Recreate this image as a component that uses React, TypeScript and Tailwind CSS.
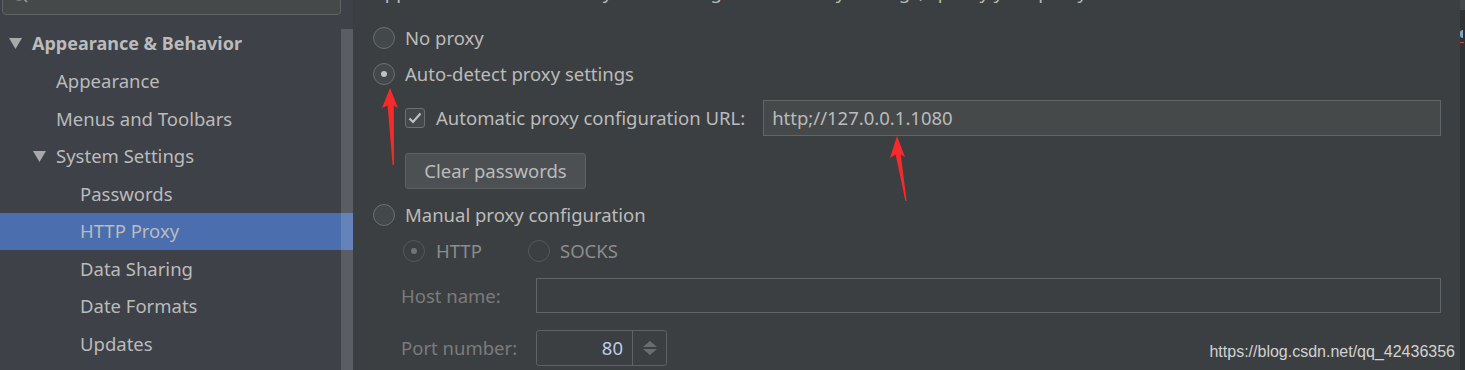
import React from "react";

const font = { fontFamily: '"Noto Sans", "Open Sans", sans-serif' };

// Sidebar tree rows
const rows: { label: string; indent: number; caret?: boolean; bold?: boolean; selected?: boolean }[] = [
  { label: "Appearance & Behavior", indent: 0, caret: true, bold: true },
  { label: "Appearance", indent: 1 },
  { label: "Menus and Toolbars", indent: 1 },
  { label: "System Settings", indent: 1, caret: true },
  { label: "Passwords", indent: 2 },
  { label: "HTTP Proxy", indent: 2, selected: true },
  { label: "Data Sharing", indent: 2 },
  { label: "Date Formats", indent: 2 },
  { label: "Updates", indent: 2 },
];

const Caret = () => (
  <svg width="13" height="11" viewBox="0 0 13 11" className="shrink-0">
    <polygon points="0,0 13,0 6.5,11" fill="#a9a9a9" />
  </svg>
);

const Radio = ({ checked, disabled }: { checked?: boolean; disabled?: boolean }) => (
  <span
    className={
      disabled
        ? "w-[22px] h-[22px] rounded-full border border-[#555759] flex items-center justify-center shrink-0"
        : "w-[22px] h-[22px] rounded-full border border-[#6c6f71] bg-[#43494a] flex items-center justify-center shrink-0"
    }
  >
    {checked && (
      <span className={disabled ? "w-[6px] h-[6px] rounded-full bg-[#737373]" : "w-[6px] h-[6px] rounded-full bg-[#c0c0c0]"} />
    )}
  </span>
);

const Sidebar = () => (
  <div className="w-[353px] shrink-0 bg-[#3e4148] relative flex flex-col">
    {/* search field, scrolled partly out of view */}
    <div className="relative ml-[2px] w-[339px] h-[31px] -mt-[16px] bg-[#45494a] border border-[#5f6263] rounded-[4px]">
      <svg width="20" height="20" viewBox="0 0 20 20" className="absolute left-[7px] top-[2px]">
        <circle cx="9" cy="7" r="6" fill="none" stroke="#8e9297" strokeWidth="1.6" />
        <line x1="13.5" y1="11.5" x2="17" y2="15" stroke="#8e9297" strokeWidth="1.8" />
      </svg>
    </div>
    <div className="mt-[10px] flex flex-col">
      {rows.map((r) => (
        <div
          key={r.label}
          className={
            "h-[37.5px] flex items-center text-[#bbbbbb] " +
            (r.selected ? "bg-[#4b6eaf] " : "") +
            (r.bold ? "font-bold text-[18px] " : "text-[18.5px] ")
          }
        >
          {r.indent === 0 && (
            <div className="flex items-center pl-[9px] gap-[10px]">
              <Caret />
              <span>{r.label}</span>
            </div>
          )}
          {r.indent === 1 && (
            <div className={r.caret ? "flex items-center pl-[33px] gap-[10px]" : "pl-[56px]"}>
              {r.caret && <Caret />}
              <span>{r.label}</span>
            </div>
          )}
          {r.indent === 2 && <span className="pl-[80px]">{r.label}</span>}
        </div>
      ))}
    </div>
    {/* overlay scrollbar */}
    <div className="absolute right-0 top-[29px] bottom-0 w-[12px] bg-white/15" />
  </div>
);

const Pane = () => (
  <div className="flex-1 min-w-0 bg-[#3c3f41] flex flex-col pl-[20px] pr-[19px] text-[18.5px] text-[#bbbbbb]">
    {/* heading line scrolled out of view: only descenders remain */}
    <div className="h-[6px] overflow-hidden">
      <div className="-mt-[20px] leading-[24px] whitespace-nowrap">
        Appearance &amp; Behavior › System Settings › HTTP Proxy settings, specify your proxy
      </div>
    </div>

    <div className="mt-[14px] h-[36px] flex items-center gap-[10px]">
      <Radio />
      <span>No proxy</span>
    </div>
    <div className="h-[36px] flex items-center gap-[10px]">
      <Radio checked />
      <span>Auto-detect proxy settings</span>
    </div>

    <div className="mt-[8px] h-[36px] flex items-center pl-[32px]">
      <span className="w-[20px] h-[20px] rounded-[3px] border border-[#6c6f71] bg-[#43494a] flex items-center justify-center shrink-0">
        <svg width="14" height="12" viewBox="0 0 14 12">
          <polyline points="1.5,6.5 5,10 12.5,1.5" fill="none" stroke="#c0c0c0" strokeWidth="2.2" />
        </svg>
      </span>
      <span className="ml-[11px] whitespace-nowrap">Automatic proxy configuration URL:</span>
      <div className="ml-[18px] flex-1 h-[36px] bg-[#45494a] border border-[#646464] flex items-center pl-[8px]">
        http;//127.0.0.1.1080
      </div>
    </div>

    <div className="mt-[17px] ml-[32px] w-[181px] h-[36px] bg-[#4c5052] border border-[#5e6263] rounded-[3px] flex items-center justify-center">
      Clear passwords
    </div>

    <div className="mt-[8px] h-[36px] flex items-center gap-[10px]">
      <Radio />
      <span>Manual proxy configuration</span>
    </div>

    <div className="h-[36px] flex items-center pl-[30px] text-[#8c8c8c]">
      <div className="w-[125px] flex items-center gap-[11px]">
        <Radio checked disabled />
        <span>HTTP</span>
      </div>
      <div className="flex items-center gap-[10px]">
        <Radio disabled />
        <span>SOCKS</span>
      </div>
    </div>

    <div className="mt-[9px] h-[35px] flex items-center pl-[28px]">
      <span className="w-[135px] shrink-0 text-[#7b7b7b]">Host name:</span>
      <div className="flex-1 h-[35px] border border-[#646464]" />
    </div>

    <div className="mt-[17px] h-[36px] flex items-center pl-[28px]">
      <span className="w-[135px] shrink-0 text-[#7b7b7b]">Port number:</span>
      <div className="w-[131px] h-[36px] border border-[#5f6263] rounded-[3px] flex">
        <div className="flex-1 flex items-center justify-end pr-[9px] text-[#b9cde6]">80</div>
        <div className="w-[34px] border-l border-[#5f6263] flex flex-col items-center justify-center gap-[2px]">
          <svg width="14" height="6" viewBox="0 0 14 6">
            <polygon points="7,0 14,6 0,6" fill="#6a6d70" />
          </svg>
          <svg width="14" height="6" viewBox="0 0 14 6">
            <polygon points="0,0 14,0 7,6" fill="#6a6d70" />
          </svg>
        </div>
      </div>
    </div>
  </div>
);

export default function App() {
  return (
    <div className="w-[1465px] h-[370px] overflow-hidden relative flex bg-[#3c3f41]" style={font}>
      <Sidebar />
      <Pane />
      {/* edge of the neighbouring window */}
      <div className="w-[5px] shrink-0 bg-[#2f3133] flex flex-col">
        <div className="h-[10px] bg-[#45484a]" />
        <div className="mt-[20px] h-[8px] w-[3px] bg-[#7fa7c9] rounded-l-full" />
        <div className="mt-[4px] h-[1px] w-[4px] bg-[#d04848]" />
      </div>

      {/* annotation arrows */}
      <svg width="1465" height="370" className="absolute inset-0 pointer-events-none">
        <polygon points="390,88 398,108 393.8,105.5 394,165 392.6,165 387.6,105.5 382,108" fill="#f62a2a" />
        <polygon points="897,136 905,157 900.8,154.5 906.6,201 905.4,201 895.6,154.5 890,158" fill="#f62a2a" />
      </svg>

      {/* watermark */}
      <div
        className="absolute right-[10px] bottom-[10px] text-[16px] text-[#d2d2d2] leading-none"
        style={{ fontFamily: '"Liberation Sans", Arial, sans-serif' }}
      >
        https://blog.csdn.net/qq_42436356
      </div>
    </div>
  );
}
